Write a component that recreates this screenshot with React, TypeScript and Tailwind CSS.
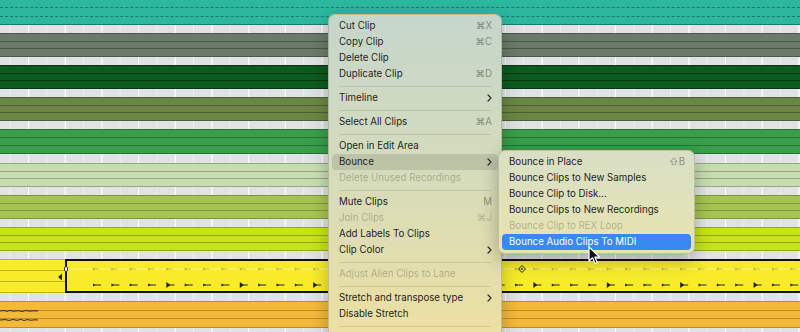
import React from "react";

type Track = { h: string; bg: string; line: string; gap: string; open?: boolean; dashed?: boolean };

const TRACKS: Track[] = [
  { gap: "h-0", h: "h-[25px]", bg: "bg-[#2bb89e]", line: "border-[#1d7a68]", open: true, dashed: true },
  { gap: "h-[8px]", h: "h-[24px]", bg: "bg-[#6b7b69]", line: "border-[#4b584a]" },
  { gap: "h-[8px]", h: "h-[24px]", bg: "bg-[#0d5a1f]", line: "border-[#053a10]" },
  { gap: "h-[8px]", h: "h-[24px]", bg: "bg-[#6b8644]", line: "border-[#4a6130]" },
  { gap: "h-[8px]", h: "h-[25px]", bg: "bg-[#399e4a]", line: "border-[#257434]" },
  { gap: "h-[8px]", h: "h-[24px]", bg: "bg-[#c6ddb1]", line: "border-[#93a983]" },
  { gap: "h-[8px]", h: "h-[24px]", bg: "bg-[#a6c452]", line: "border-[#7b9838]" },
  { gap: "h-[8px]", h: "h-[24px]", bg: "bg-[#c6e41b]", line: "border-[#91ab12]" },
];

const gapClass =
  "bg-[#e1e2e4] bg-[linear-gradient(90deg,rgba(255,255,255,0.95)_1px,transparent_1px),linear-gradient(90deg,rgba(255,255,255,0.45)_1px,transparent_1px)] bg-[length:36.7px_100%,18.35px_100%] bg-[position:28px_0,9.65px_0]";

function Gap({ h }: { h: string }) {
  return <div className={`${h} shrink-0 ${gapClass}`} />;
}

function Lane({ t, children }: { t: Track; children?: React.ReactNode }) {
  const line = `border-t ${t.line} ${t.dashed ? "border-dashed" : ""}`;
  return (
    <div className={`relative flex shrink-0 flex-col ${t.h} ${t.bg} ${t.line} ${t.open ? "border-b" : "border-y"}`}>
      <div className="flex-1" />
      <div className={line} />
      <div className="flex-1" />
      <div className={line} />
      <div className="flex-1" />
      {children}
    </div>
  );
}

const beats = Array.from({ length: 39 }, (_, k) => 93 + k * 18.35).filter((x) => x < 805);

function ClipMarkers() {
  return (
    <svg width={735} height={30} className="block">
      <line x1={0} y1={8} x2={735} y2={8} stroke="rgba(255,255,255,0.45)" strokeWidth={1} />
      {beats.map((gx, k) => {
        const x = gx - 67;
        const big = k % 4 === 0 && k > 0;
        return (
          <g key={k}>
            <path d={`M${x} 6.5 L${x + 2.5} 8 L${x} 9.5 Z`} fill="rgba(70,70,40,0.4)" />
            <line x1={x + 2} y1={8} x2={x + 6} y2={8} stroke="rgba(70,70,40,0.3)" strokeWidth={1} />
            <path
              d={big ? `M${x} 21 L${x + 4} 24 L${x} 27 Z` : `M${x} 22.5 L${x + 3} 24 L${x} 25.5 Z`}
              fill="#1f1f1a"
            />
            <line x1={x + 2} y1={24} x2={x + 8} y2={24} stroke="#2a2a20" strokeWidth={1} />
          </g>
        );
      })}
      <path d="M455 4.5 L458.5 8 L455 11.5 L451.5 8 Z" fill="none" stroke="#222" strokeWidth={1} />
      <circle cx={455} cy={8} r={0.9} fill="#222" />
    </svg>
  );
}

function Squiggle() {
  return (
    <svg width={40} height={27} className="absolute left-0 top-0">
      <path d="M0 9 L4 8.6 L7 9.3 L10 8.5 L14 9.2 L18 8.7 L22 9.4 L26 8.6 L30 9.1 L34 8.8 L38 9" stroke="#1c1c1c" strokeWidth={0.9} fill="none" />
      <path d="M0 18 L5 17.6 L9 18.4 L13 17.5 L17 18.3 L21 17.4 L24 18.6 L27 17.6 L31 18.2 L35 17.8 L38 18" stroke="#1c1c1c" strokeWidth={0.9} fill="none" />
    </svg>
  );
}

type Item =
  | { sep: true }
  | { sep?: false; label: string; key?: string; sub?: boolean; off?: boolean; hover?: "gray" | "blue" };

const MAIN: Item[] = [
  { label: "Cut Clip", key: "⌘X" },
  { label: "Copy Clip", key: "⌘C" },
  { label: "Delete Clip" },
  { label: "Duplicate Clip", key: "⌘D" },
  { sep: true },
  { label: "Timeline", sub: true },
  { sep: true },
  { label: "Select All Clips", key: "⌘A" },
  { sep: true },
  { label: "Open in Edit Area" },
  { label: "Bounce", sub: true, hover: "gray" },
  { label: "Delete Unused Recordings", off: true },
  { sep: true },
  { label: "Mute Clips", key: "M" },
  { label: "Join Clips", key: "⌘J", off: true },
  { label: "Add Labels To Clips" },
  { label: "Clip Color", sub: true },
  { sep: true },
  { label: "Adjust Alien Clips to Lane", off: true },
  { sep: true },
  { label: "Stretch and transpose type", sub: true },
  { label: "Disable Stretch" },
  { sep: true },
];

const BOUNCE: Item[] = [
  { label: "Bounce in Place", key: "⇧B" },
  { label: "Bounce Clips to New Samples" },
  { label: "Bounce Clip to Disk..." },
  { label: "Bounce Clips to New Recordings" },
  { label: "Bounce Clip to REX Loop", off: true },
  { label: "Bounce Audio Clips To MIDI", hover: "blue" },
];

function Chevron({ white }: { white?: boolean }) {
  return (
    <svg width={5} height={8} viewBox="0 0 5 8">
      <path d="M1 1 L4 4 L1 7" fill="none" stroke={white ? "#fff" : "#2a2a2a"} strokeWidth={1.2} strokeLinecap="round" strokeLinejoin="round" />
    </svg>
  );
}

function MenuRows({ items }: { items: Item[] }) {
  return (
    <>
      {items.map((it, i) => {
        if (it.sep) {
          return (
            <div key={i} className="flex h-[8px] items-center px-[7px]">
              <div className="h-px flex-1 bg-black/10" />
            </div>
          );
        }
        const hover = it.hover === "gray" ? "bg-black/[0.11]" : it.hover === "blue" ? "bg-[#3a88f2] text-white" : "";
        const color = it.hover === "blue" ? "" : it.off ? "text-black/25" : "text-[#242424]";
        return (
          <div key={i} className={`flex h-[16px] items-center justify-between rounded-[4px] pl-[7px] pr-[6px] ${hover} ${color}`}>
            <span className="whitespace-nowrap">{it.label}</span>
            {it.key && <span className={`whitespace-nowrap ${it.off ? "text-black/20" : "text-black/40"}`}>{it.key}</span>}
            {it.sub && <Chevron white={it.hover === "blue"} />}
          </div>
        );
      })}
    </>
  );
}

function Cursor() {
  return (
    <svg width={14} height={20} viewBox="0 0 14 20" className="absolute left-[588px] top-[246px]">
      <path d="M1 1 L1 15 L4.5 11.8 L7 17.5 L9.2 16.5 L6.8 11 L11.5 11 Z" fill="#111" stroke="#fff" strokeWidth={1.2} strokeLinejoin="round" />
    </svg>
  );
}

export default function App() {
  const yellow: Track = { gap: "h-[8px]", h: "h-[34px]", bg: "bg-[#f7eb2a]", line: "border-[#bcb21c]" };
  const orange: Track = { gap: "h-[8px]", h: "h-[27px]", bg: "bg-[#f3b93b]", line: "border-[#c18c24]" };

  return (
    <div className="relative h-[332px] w-[800px] overflow-hidden bg-[#e1e2e4] font-['Inter','DejaVu_Sans',sans-serif] text-[9.7px] leading-none">
      <div className="flex h-full flex-col">
        {TRACKS.map((t, i) => (
          <React.Fragment key={i}>
            {i > 0 && <Gap h={i === 5 ? "h-[9px]" : t.gap} />}
            <Lane t={t} />
          </React.Fragment>
        ))}
        <Gap h="h-[8px]" />
        <div className="relative flex h-[34px] shrink-0">
          <div className="w-[65px] shrink-0">
            <Lane t={yellow} />
          </div>
          <div className="flex-1 overflow-hidden border-y-2 border-l-2 border-[#111] bg-[#f7eb2a]">
            <ClipMarkers />
          </div>
          <svg width={6} height={8} className="absolute left-[57px] top-[14px]">
            <path d="M5 0.5 L1 4 L5 7.5 Z" fill="#222" />
          </svg>
          <div className="absolute left-[64px] top-[7px] h-[6px] w-[4px] rounded-full border border-[#333] bg-white" />
        </div>
        <Gap h="h-[8px]" />
        <Lane t={orange}>
          <Squiggle />
        </Lane>
        <div className={`flex-1 ${gapClass}`} />
      </div>

      <div className="absolute left-[328px] top-[14px] h-[330px] w-[174px] rounded-[7px] border border-black/15 bg-gradient-to-b from-[#c6d6cb] via-[#d6dcba] to-[#eee0a0] px-[3px] pt-[3px] shadow-[0_6px_18px_rgba(0,0,0,0.25)]">
        <MenuRows items={MAIN} />
      </div>

      <div className="absolute left-[498px] top-[150px] w-[197px] rounded-[7px] border border-black/15 bg-gradient-to-b from-[#d8dfc6] to-[#e7e4ad] px-[3px] py-[3px] shadow-[0_6px_18px_rgba(0,0,0,0.28)]">
        <MenuRows items={BOUNCE} />
      </div>

      <Cursor />
    </div>
  );
}
